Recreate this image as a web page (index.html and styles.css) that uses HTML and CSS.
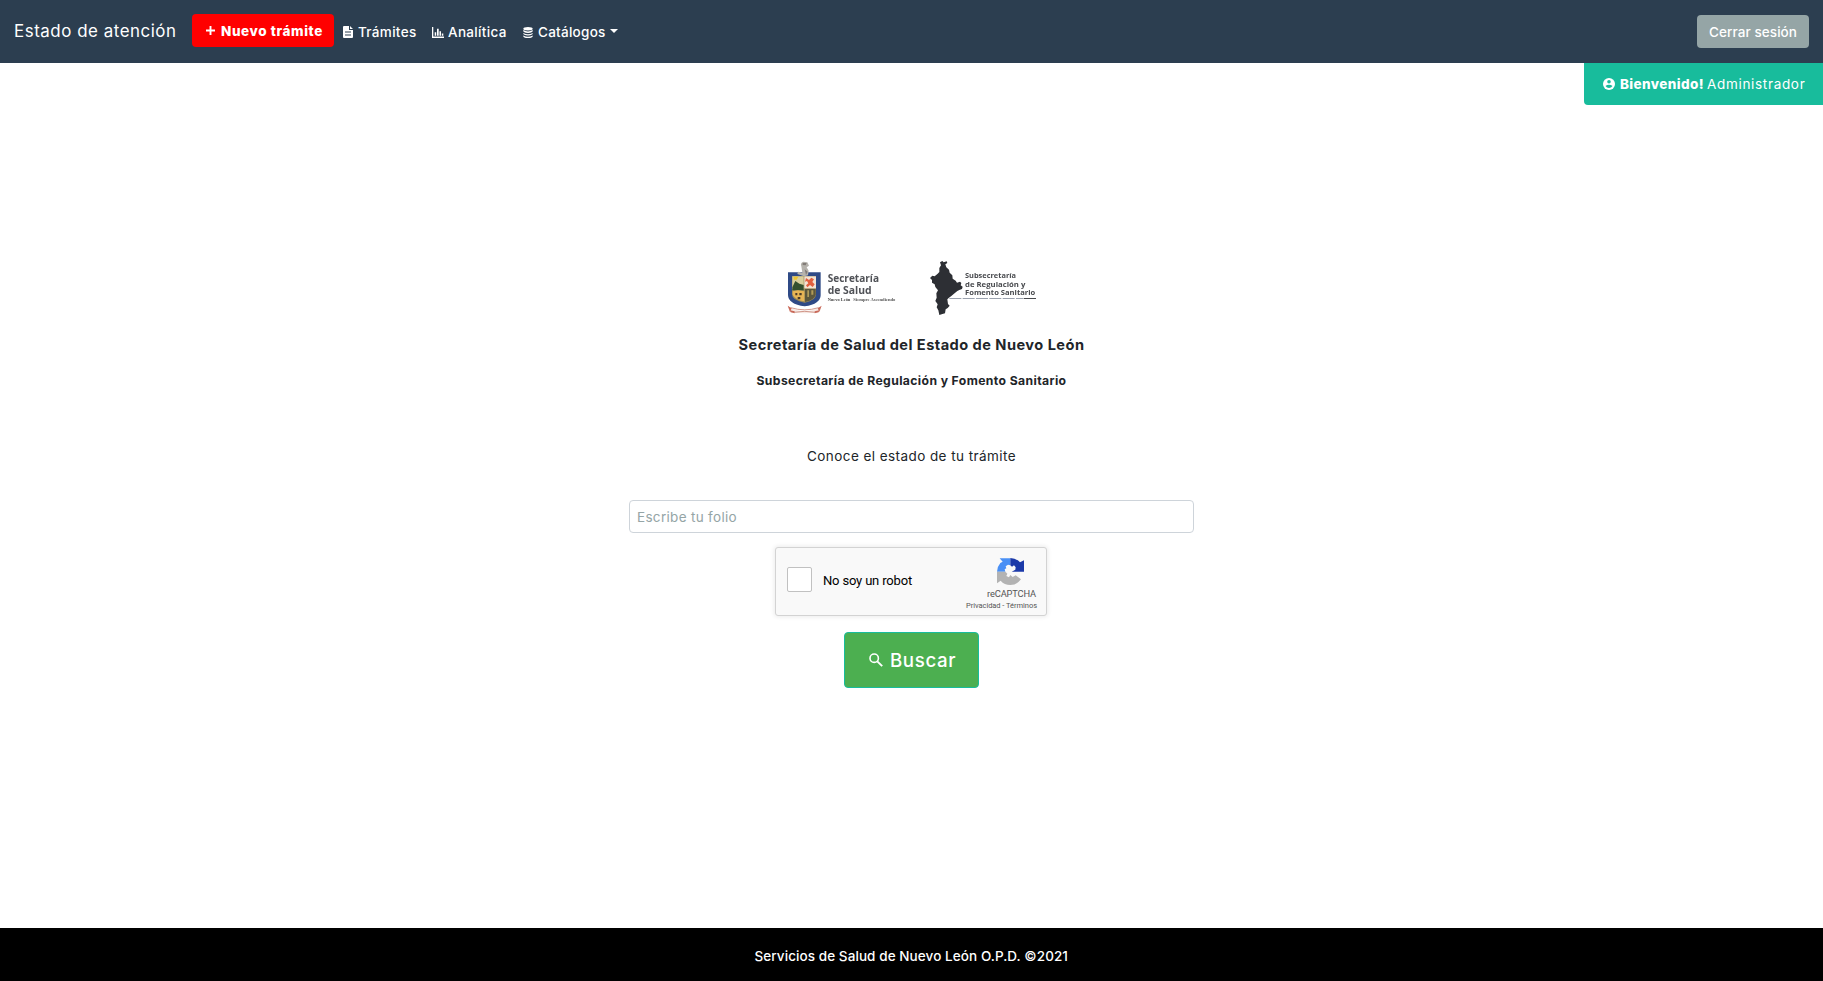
FILE: index.html
```html
<!DOCTYPE html>
<html lang="es">
<head>
<meta charset="utf-8">
<title>Estado de atención</title>
<link rel="stylesheet" href="styles.css">
</head>
<body>
<header class="navbar">
  <a class="brand"><span class="t t-brand">Estado de atención</span></a>
  <a class="btn btn-new">
    <svg class="plus" viewBox="0 0 9 9"><path d="M4.500 0v9M0 4.500h9" stroke="#fff" stroke-width="1.900"/></svg>
    <span class="t t-new">Nuevo trámite</span>
  </a>
  <nav class="links">
    <a class="link link-doc"><svg class="ico-doc" viewBox="0 0 10 12"><path fill="#fff" fill-rule="evenodd" d="M1 0h5v4h4v7a1 1 0 0 1-1 1H1a1 1 0 0 1-1-1V1a1 1 0 0 1 1-1zM7 0l3 3H7zM2 5.500v1h6v-1zM2 8.500v1h6v-1z"/></svg><span class="t t-tram">Trámites</span></a>
    <a class="link link-chart"><svg class="ico-chart" viewBox="0 0 12 11"><path fill="#fff" d="M0 0h1.300v9.600H12V11H0zM2.700 5.200h1.500v3.600H2.700zM5 1.800h1.700v7H5zM7.500 4.200H9v4.600H7.500zM9.800 6.500h1.500v2.300H9.800z"/></svg><span class="t t-anal">Analítica</span></a>
    <a class="link link-db"><svg class="ico-db" viewBox="0 0 10 11"><g fill="#fff"><ellipse cx="5" cy="1.700" rx="4.700" ry="1.700"/><path d="M.3 3.100Q5 5.700 9.700 3.100v1Q9.700 5.900 5 5.900T.3 4.100zM.3 5.900Q5 8.400 9.700 5.900v.7Q9.700 8.400 5 8.400T.3 6.600zM.3 8.500Q5 10.900 9.700 8.500V9.200Q9.700 11 5 11T.3 9.200z"/></g></svg><span class="t t-cat">Catálogos</span><i class="caret"></i></a>
  </nav>
  <a class="btn btn-out"><span class="t t-out">Cerrar sesión</span></a>
</header>
<div class="welcome">
  <svg class="ico-user" viewBox="0 0 11 11"><circle cx="5.500" cy="5.500" r="5.500" fill="#fff"/><circle cx="5.500" cy="3.500" r="1.650" fill="#18bc9c"/><path d="M2.300 7.400Q3.500 6.100 5.500 6.100T8.700 7.400Q7.600 9.100 5.500 9.100T2.300 7.400z" fill="#18bc9c"/></svg>
  <span class="t t-hi">Bienvenido!</span>
  <span class="t t-admin">Administrador</span>
</div>
<main class="main">
  <svg class="logos" viewBox="0 0 849 225">
    <g class="soft">
      <path d="M54 67h98v68q0 27-48 34q-50-7-50-34z" fill="#2f4a86"/>
      <path d="M66 78h72v54q0 20-34 26q-38-6-38-26z" fill="#9c8b58"/>
      <path d="M67 79h34v38H67z" fill="#d9cf9e"/>
      <path d="M67 112l9-19 12 8 13 4v16H67z" fill="#34502f"/>
      <path d="M71 80h14l-5 9h-9z" fill="#eec531"/>
      <path d="M103 79h35v36h-35z" fill="#f3e3d4"/>
      <path d="M108 84l9 6 7-7 8 5-5 8 7 7-6 8-8-6-8 7-4-6 7-6-4-7-6 2z" fill="#e2603f"/>
      <path d="M68 124l16-3 19 3v30q-26-4-35-19z" fill="#e8b555"/>
      <path d="M76 129h6v7h-6zM88 129h7v7h-7zM83 141h8v7h-8z" fill="#4d3b28"/>
      <path d="M105 117h32v16q-2 17-32 23z" fill="#5c573d"/>
      <path d="M112 121h5v20h-5zM124 121h6v13h-6z" fill="#b29c5a"/>
      <path d="M94 49q-4-10 6-14l12 2 5 10-7 5 6 10-2 14-12 3-20-7 2-7 13 3z" fill="#b6b3ad"/>
      <path d="M98 39h12l-3 7-9-1zM104 58l9 7-5 10z" fill="#827c78"/>
      <path d="M55 171q48 24 98 0l-3 14q-46 10-92 0z" fill="#f6e9e4"/>
      <path d="M53 167l12 8-5 10zM155 167l-12 8 5 10zM60 181l14 3v6l-12-3zM148 181l-14 3v6l12-3z" fill="#c96858"/>
      <path d="M62 173q42 13 84 0M72 187q32-6 64 0" fill="none" stroke="#c98577" stroke-width="2.500"/>
      <g fill="#505257" font-family="'Open Sans', sans-serif" font-weight="700">
        <text x="173" y="97" font-size="31" textLength="154" lengthAdjust="spacingAndGlyphs">Secretaría</text>
        <text x="173" y="131" font-size="31" textLength="132" lengthAdjust="spacingAndGlyphs">de Salud</text>
      </g>
      <text x="173" y="152" font-size="12" font-weight="700" fill="#444" font-family="'Liberation Serif', serif" textLength="68" lengthAdjust="spacingAndGlyphs">Nuevo León</text>
      <text x="250" y="152" font-size="12" fill="#555" font-weight="700" font-family="'Liberation Serif', serif" textLength="126" lengthAdjust="spacingAndGlyphs">Siempre Ascendiendo</text>
    </g>
    <g class="soft" transform="translate(420 0)">
      <path d="M90 37L97 33 101 37 110 34 112 39 106 43 109 52 117 59 119 68 127 76 128 86 137 92 141 98 150 95 154 99 152 106 158 110 156 117 148 120 142 123 132 131 124 138 117 143 112 148 114 162 119 167 113 174 107 178 105 190 95 193 88 195 85 181 80 172 83 163 76 153 80 143 79 130 84 121 76 111 74 103 66 98 66 90 60 84 67 77 74 79 83 71 88 66 88 54 93 46z" fill="#2d2f34"/>
      <g fill="#484a4e" font-family="'Open Sans', sans-serif" font-weight="700" font-size="22">
        <text x="165" y="84" textLength="153" lengthAdjust="spacingAndGlyphs">Subsecretaría</text>
        <text x="165" y="110" textLength="181" lengthAdjust="spacingAndGlyphs">de Regulación y</text>
        <text x="165" y="136" textLength="211" lengthAdjust="spacingAndGlyphs">Fomento Sanitario</text>
      </g>
      <path d="M118 145.500h221" stroke="#9ba2ae" stroke-width="3" stroke-dasharray="36 4"/>
      <path d="M341 145.500h37" stroke="#484a4e" stroke-width="3"/>
    </g>
  </svg>
  <h1 class="title"><span class="t t-h1">Secretaría de Salud del Estado de Nuevo León</span></h1>
  <h2 class="subtitle"><span class="t t-h2">Subsecretaría de Regulación y Fomento Sanitario</span></h2>
  <p class="lead"><span class="t t-lead">Conoce el estado de tu trámite</span></p>
  <div class="field"><span class="t t-field">Escribe tu folio</span></div>
  <div class="captcha">
    <span class="check"></span>
    <span class="t t-robot">No soy un robot</span>
    <div class="rc">
      <svg class="rc-logo" viewBox="0 0 81 81">
        <path d="M8 1H40V22L33 20 26 25 28 31 23 34 25 41H0Q1 25 10 15L17 11z" fill="#4a90f5"/>
        <path d="M40 0Q58 1 69 13L81 7V41H44L55 35 56 28 51 22 45 26 40 22z" fill="#1c3aa9"/>
        <path d="M0 41H25L31 47 28 54 36 58 40 51 47 57 56 52 72 64Q59 81 40 81Q22 81 11 68L0 76z" fill="#b3b3b3"/>
      </svg>
      <span class="t t-rc">reCAPTCHA</span>
      <span class="t t-priv">Privacidad - Términos</span>
    </div>
  </div>
  <a class="search">
    <svg class="ico-search" viewBox="0 0 14 14"><circle cx="5.200" cy="5.200" r="4.200" fill="none" stroke="#fff" stroke-width="1.600"/><path d="M8.300 8.300L13.200 13.200" stroke="#fff" stroke-width="1.900"/></svg>
    <span class="t t-search">Buscar</span>
  </a>
</main>
<footer class="footer"><span class="t t-foot">Servicios de Salud de Nuevo León O.P.D. ©2021</span></footer>
</body>
</html>
```
FILE: styles.css
```css
* { box-sizing: border-box; }
body { margin: 0; height: 981px; display: flex; flex-direction: column; background: #fff; color: #212529; font-family: Inter, sans-serif; font-size: 13.5px; line-height: 20px; overflow: hidden; }
svg { display: block; flex: none; }
.t { display: block; flex: none; white-space: nowrap; }

/* Navigation bar */
.navbar { height: 63px; flex: none; display: flex; align-items: flex-start; padding: 0 14px 0 14px; background: #2c3e50; color: #fff; }
.brand { padding-top: 21px; font-size: 16.9px; }
.t-brand { width: 163px; letter-spacing: .54px; }
.btn { height: 33px; border-radius: 4px; display: flex; align-items: center; }
.btn-new { width: 142px; margin: 14px 0 0 15px; padding-left: 14px; gap: 6px; background: #f00; font-weight: 800; }
.plus { width: 9px; height: 9px; }
.t-new { width: 102px; letter-spacing: .6px; }
.links { display: flex; padding-top: 22px; font-weight: 500; }
.link { display: flex; align-items: center; }
.link-doc { margin-left: 9px; gap: 5px; }
.link-chart { margin-left: 15px; gap: 4px; }
.link-db { margin-left: 17px; gap: 5px; }
.ico-doc { width: 10px; height: 12px; }
.ico-chart { width: 12px; height: 11px; }
.ico-db { width: 10px; height: 11px; }
.t-tram { width: 59px; letter-spacing: .32px; }
.t-anal { width: 58px; letter-spacing: .32px; }
.t-cat { width: 68px; letter-spacing: .26px; }
.caret { border: 4.500px solid transparent; border-top-color: #fff; border-bottom: 0; margin-top: -3px; margin-left: -1px; }
.btn-out { width: 112px; margin: 15px 0 0 auto; justify-content: center; background: #95a5a6; font-weight: 500; }
.t-out { width: 88px; letter-spacing: .08px; }

/* Session banner */
.welcome { align-self: flex-end; width: 239px; height: 42px; flex: none; display: flex; align-items: center; padding-left: 19px; background: #18bc9c; color: #fff; border-bottom-left-radius: 4px; }
.ico-user { width: 12px; height: 12px; margin-right: 5px; }
.t-hi { width: 84px; margin-right: 3px; font-weight: 800; letter-spacing: .4px; }
.t-admin { width: 99px; letter-spacing: .68px; }

/* Lookup form */
.main { flex: 1; display: flex; flex-direction: column; align-items: center; padding-top: 145px; }
.logos { width: 283px; height: 75px; }
.soft { filter: blur(1.2px); }
.title { margin: 8px 0 0; font-size: 14.600px; line-height: 24px; font-weight: 700; }
.t-h1 { width: 346px; letter-spacing: .46px; }
.subtitle { margin: 14px 0 0; font-size: 12.200px; font-weight: 700; }
.t-h2 { width: 310px; letter-spacing: .384px; }
.lead { margin: 55px 0 0; }
.t-lead { width: 209px; letter-spacing: .432px; }
.field { width: 565px; height: 33px; margin-top: 34px; padding: 6px 7px; border: 1px solid #ced4da; border-radius: 4px; color: #95a5a6; }
.t-field { width: 100px; letter-spacing: .313px; }
.captcha { width: 272px; height: 69px; margin: 14px 1px 0 0; display: flex; background: #f9f9f9; border: 1px solid #d3d3d3; border-radius: 3px; box-shadow: 0 0 4px 1px rgba(0,0,0,.08); font-family: Roboto, sans-serif; }
.check { width: 25px; height: 25px; margin: 19px 0 0 11px; border: 1px solid #c1c1c1; border-radius: 2px; background: #fff; }
.t-robot { width: 89px; margin: 23px 0 0 11px; font-size: 13px; letter-spacing: -.17px; color: #000; }
.rc { flex: 1; margin-right: 9px; display: flex; flex-direction: column; align-items: flex-end; color: #555; }
.rc-logo { width: 27px; height: 27px; margin: 10px 13px 0 0; }
.t-rc { width: 49px; font-size: 9.3px; letter-spacing: -.14px; line-height: 12px; margin: 3px 1px 0 0; }
.t-priv { width: 71px; font-size: 7.500px; letter-spacing: -.05px; line-height: 12px; }
.search { width: 135px; height: 56px; margin-top: 16px; padding-left: 24px; display: flex; align-items: center; gap: 7px; background: #4caf50; border: 1px solid #18bc9c; border-radius: 4px; color: #fff; font-size: 18.700px; font-weight: 500; }
.ico-search { width: 14px; height: 14px; margin-top: -1px; }
.t-search { width: 66px; letter-spacing: .6px; padding-top: 1px; }

.footer { height: 53px; flex: none; display: flex; justify-content: center; padding-top: 18px; background: #000; color: #fff; font-weight: 500; }
.t-foot { width: 314px; letter-spacing: .08px; }
```
